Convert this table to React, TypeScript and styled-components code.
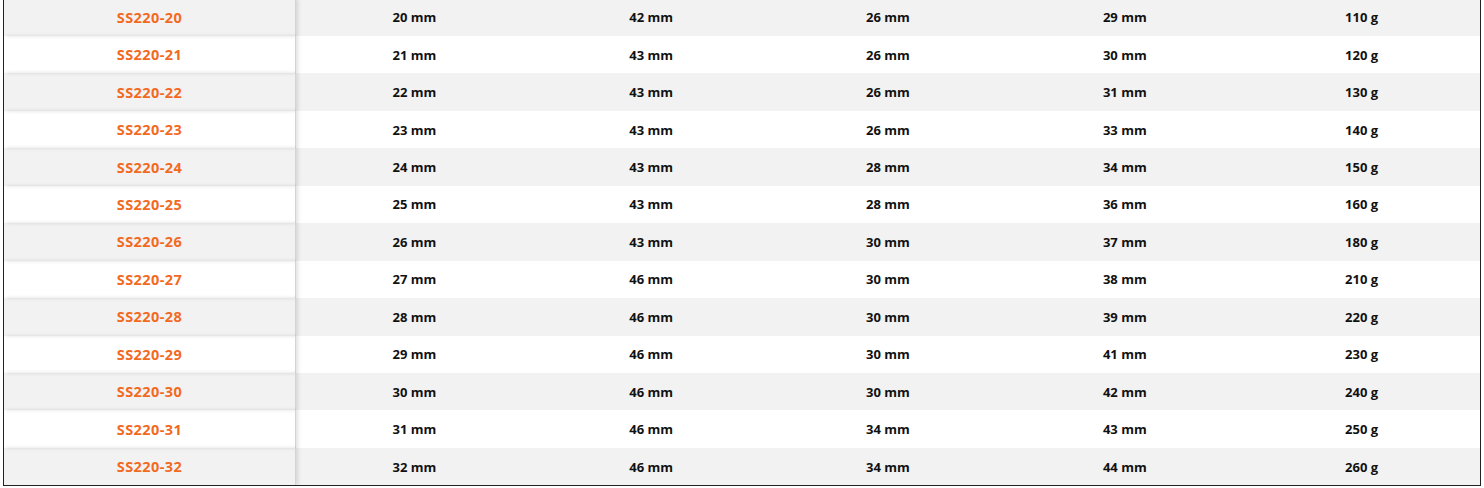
import React from "react";
import styled, { createGlobalStyle } from "styled-components";

const Global = createGlobalStyle`
  html, body { margin: 0; padding: 0; background: #ffffff; }
  body { font-family: "Open Sans", "Liberation Sans", sans-serif; }
`;

const Frame = styled.div`
  margin: -1.45px 3px 0;
  border-left: 1px solid #222222;
  border-right: 1px solid #222222;
  border-bottom: 1px solid #222222;
  overflow: hidden;
`;

const Row = styled.div<{ $alt: boolean }>`
  display: grid;
  grid-template-columns: 292px repeat(5, 1fr);
  height: 37.45px;
  background: ${(p) => (p.$alt ? "#f2f2f2" : "#ffffff")};
`;

const Cell = styled.div`
  display: flex;
  align-items: center;
  justify-content: center;
  font-size: 13px;
  font-weight: 700;
  color: #111111;
  white-space: nowrap;
`;

const ModelCell = styled(Cell)`
  color: #f26a1f;
  font-size: 14.5px;
  letter-spacing: 0.4px;
  position: relative;
  border-right: 1px solid #d4d4d4;
  box-shadow: 2px 0 4px rgba(0, 0, 0, 0.12);
  z-index: 1;
`;

const rows: [string, number, number, number, number, number][] = [
  ["SS220-20", 20, 42, 26, 29, 110],
  ["SS220-21", 21, 43, 26, 30, 120],
  ["SS220-22", 22, 43, 26, 31, 130],
  ["SS220-23", 23, 43, 26, 33, 140],
  ["SS220-24", 24, 43, 28, 34, 150],
  ["SS220-25", 25, 43, 28, 36, 160],
  ["SS220-26", 26, 43, 30, 37, 180],
  ["SS220-27", 27, 46, 30, 38, 210],
  ["SS220-28", 28, 46, 30, 39, 220],
  ["SS220-29", 29, 46, 30, 41, 230],
  ["SS220-30", 30, 46, 30, 42, 240],
  ["SS220-31", 31, 46, 34, 43, 250],
  ["SS220-32", 32, 46, 34, 44, 260],
];

export default function App() {
  return (
    <>
      <Global />
      <Frame>
        {rows.map((r, i) => (
          <Row key={r[0]} $alt={i % 2 === 0}>
            <ModelCell>{r[0]}</ModelCell>
            <Cell>{r[1]} mm</Cell>
            <Cell>{r[2]} mm</Cell>
            <Cell>{r[3]} mm</Cell>
            <Cell>{r[4]} mm</Cell>
            <Cell>{r[5]} g</Cell>
          </Row>
        ))}
      </Frame>
    </>
  );
}
